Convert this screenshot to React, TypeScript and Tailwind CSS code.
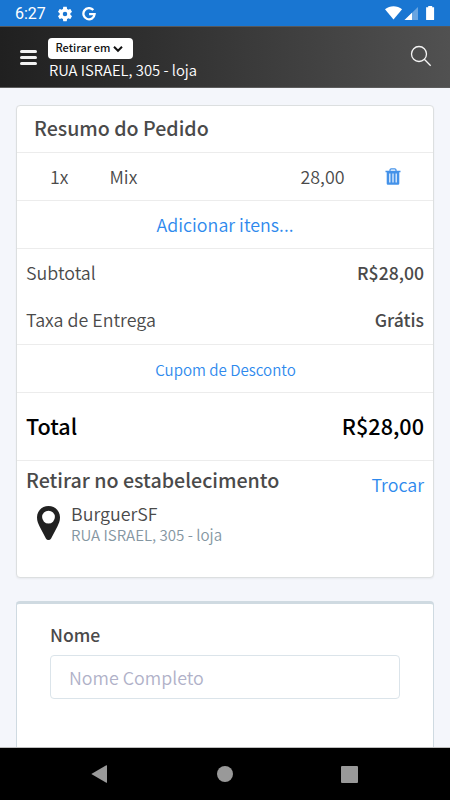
import React from 'react';

function StatusBar() {
  return (
    <div className="flex h-[26px] shrink-0 items-center bg-[#1976d2] pl-[15px] pr-[15px] text-white">
      <span className="w-[31px] whitespace-nowrap font-[Roboto,sans-serif] text-[16px] leading-[26px] mt-[2px]">6:27</span>
      <svg className="ml-[10px] mt-px h-[18px] w-[18px]" viewBox="0 0 24 24" fill="currentColor">
        <path d="M19.14 12.94c.04-.3.06-.61.06-.94 0-.32-.02-.64-.07-.94l2.03-1.58c.18-.14.23-.41.12-.61l-1.92-3.32c-.12-.22-.37-.29-.59-.22l-2.39.96c-.5-.38-1.03-.7-1.62-.94l-.36-2.54c-.04-.24-.24-.41-.48-.41h-3.84c-.24 0-.43.17-.47.41l-.36 2.54c-.59.24-1.13.57-1.62.94l-2.39-.96c-.22-.08-.47 0-.59.22L2.74 8.87c-.12.21-.08.47.12.61l2.03 1.58c-.05.3-.09.63-.09.94s.02.64.07.94l-2.03 1.58c-.18.14-.23.41-.12.61l1.92 3.32c.12.22.37.29.59.22l2.39-.96c.5.38 1.03.7 1.62.94l.36 2.54c.05.24.24.41.48.41h3.84c.24 0 .44-.17.47-.41l.36-2.54c.59-.24 1.13-.56 1.62-.94l2.39.96c.22.08.47 0 .59-.22l1.92-3.32c.12-.22.07-.47-.12-.61zM12 15A3 3 0 1 1 12 9a3 3 0 0 1 0 6z" />
      </svg>
      <svg className="ml-[8px] mt-px h-[14px] w-[14px]" viewBox="0 0 14 14" fill="none" stroke="currentColor" strokeWidth="2.3">
        <path d="M11.300 3.100A5.600 5.600 0 1 0 12.600 7.200H7.100" />
      </svg>
      <div className="grow" />
      <svg className="h-[14px] w-[50px]" viewBox="0 0 50 14">
        <path d="M0 3.300C4.900-.9 12.200-.9 17.100 3.300L8.500 13.500z" fill="#fff" />
        <path d="M33 1v13H19.500z" fill="#fff" fillOpacity=".35" />
        <path d="M27 6.800V14h-7.500z" fill="#fff" />
        <path d="M43.200 0h4v1.300h1.900v12.200a.7.7 0 0 1-.7.700h-6.600a.7.7 0 0 1-.7-.7V1.300h2.100z" fill="#fff" />
      </svg>
    </div>
  );
}

function Header() {
  return (
    <header className="flex h-[62px] shrink-0 items-start border-t border-b border-t-[#55585c] border-b-[#5c5c5c] bg-linear-to-r from-[#202020] to-[#515151] pl-[19.500px] pr-[18px]">
      <div className="mt-[23px] flex w-[17.500px] flex-col gap-[3px]">
        <span className="h-[3px] rounded-sm bg-[#f2f2f2]" />
        <span className="h-[3px] rounded-sm bg-[#f2f2f2]" />
        <span className="h-[3px] rounded-sm bg-[#f2f2f2]" />
      </div>
      <div className="ml-[11px] mt-[11px]">
        <button className="flex h-[21px] w-[85px] items-center rounded bg-white pl-[7.500px] text-[11px] font-medium text-[#111]">
          <span className="-mt-[3px] w-[54.500px] whitespace-nowrap text-left leading-[18px]">Retirar em</span>
          <svg className="ml-[3px] h-2 w-[10px]" viewBox="0 0 10 8" fill="none" stroke="#111" strokeWidth="2">
            <path d="M1 1.800l4 4 4-4" />
          </svg>
        </button>
        <div className="ml-px whitespace-nowrap text-[14.800px] font-[350] leading-[22px] text-white">RUA ISRAEL, 305 - loja</div>
      </div>
      <div className="grow" />
      <svg className="mt-[18px] h-[22px] w-[22px]" viewBox="0 0 22 22" fill="none" stroke="#f5f5f5" strokeWidth="1.300">
        <circle cx="9" cy="9" r="7.500" />
        <path d="M14.300 14.300l6.400 6.400" />
      </svg>
    </header>
  );
}

function TrashIcon() {
  return (
    <svg className="h-[17px] w-[16px]" viewBox="0 0 16 17">
      <path d="M5 3V1.900Q5.100.8 6.200.8h3.600Q10.900.8 11 1.900V3" fill="none" stroke="#4492e9" strokeWidth="1.200" />
      <path d="M.5 2.700h15v1.500h-15zM1.700 4h12.600v11.500a1.200 1.200 0 0 1-1.200 1.200H2.900a1.200 1.200 0 0 1-1.200-1.200z" fill="#4492e9" />
      <path d="M4.800 5.500v9M8 5.500v9M11.200 5.500v9" stroke="#e4f0fd" strokeWidth="1.300" />
    </svg>
  );
}

function OrderSummary() {
  return (
    <section className="h-[473px] shrink-0 rounded border border-[#dcdfe0] bg-white shadow-[0_1px_2px_rgba(0,0,0,0.05)]">
      <h2 className="h-[47px] border-b border-[#ececec] pl-[17px] text-[19.600px] font-medium leading-[44px] text-[#4a4a4a]">Resumo do Pedido</h2>
      <div className="flex h-12 items-center border-b border-[#ececec] pl-[33px] pr-[32px] text-[17.850px] font-[350] leading-[47px] text-[#4a4a4a]">
        <span className="w-[59.500px]">1x</span>
        <span className="grow">Mix</span>
        <span className="mr-[40.500px]">28,00</span>
        <TrashIcon />
      </div>
      <div className="h-12 border-b border-[#ececec] text-center text-[17.850px] font-[350] leading-[47px] text-[#2e89ed]">Adicionar itens...</div>
      <div className="h-24 border-b border-[#ececec] px-[9px] text-[17.850px] font-[350] text-[#4a4a4a]">
        <div className="flex h-[47px] items-center justify-between leading-[47px]">
          <span>Subtotal</span>
          <span className="text-[17.600px] font-medium">R$28,00</span>
        </div>
        <div className="flex h-[47px] items-center justify-between leading-[47px]">
          <span>Taxa de Entrega</span>
          <span className="text-[17.600px] font-medium">Grátis</span>
        </div>
      </div>
      <div className="h-12 border-b border-[#ececec] pl-px text-center text-[15.100px] font-[350] leading-[48px] text-[#2e89ed]">Cupom de Desconto</div>
      <div className="flex h-[68px] items-center justify-between border-b border-[#ececec] px-[9px] text-[21.600px] font-medium text-black">
        <span>Total</span>
        <span>R$28,00</span>
      </div>
      <div className="flex justify-between px-[9px]">
        <div>
          <h3 className="whitespace-nowrap text-[19.650px] font-medium leading-[38px] text-[#4a4a4a]">Retirar no estabelecimento</h3>
          <div className="flex pl-[11px] pt-px">
            <svg className="mt-[6px] h-[34px] w-[23px]" viewBox="0 0 23 34">
              <path fillRule="evenodd" d="M11.500 0C5.100 0 0 4.900 0 11.200c0 3.800 1.200 6.300 2.600 9.300L8.900 32.400q.9 1.600 2.600 1.600t2.600-1.600L20.400 20.500C21.800 17.500 23 15 23 11.200 23 4.900 17.900 0 11.500 0zm0 4.700a6.400 6.400 0 1 1 0 12.800 6.400 6.400 0 0 1 0-12.800z" fill="#212121" />
            </svg>
            <div className="ml-[11px] whitespace-nowrap font-[350]">
              <div className="text-[17.850px] leading-[26px] text-[#4a4a4a]">BurguerSF</div>
              <div className="text-[15.100px] leading-4 text-[#8496a2]">RUA ISRAEL, 305 - loja</div>
            </div>
          </div>
        </div>
        <a className="text-[17.850px] font-[350] leading-[46px] text-[#2e89ed]">Trocar</a>
      </div>
    </section>
  );
}

function CustomerForm() {
  return (
    <section className="mt-[23px] grow rounded-t border border-b-0 border-t-[3px] border-[#cfdae1] bg-white px-[33px] pt-[17px]">
      <label className="block text-[17.600px] font-medium leading-[28px] text-[#4a4a4a]">Nome</label>
      <input
        className="mt-[6px] block h-11 w-[350px] rounded border border-[#dbe4ea] bg-white pl-[18px] text-[17.850px] font-[350] placeholder:text-[#b0b1c8] placeholder:opacity-100"
        placeholder="Nome Completo"
      />
    </section>
  );
}

function NavBar() {
  return (
    <nav className="flex h-[53px] shrink-0 items-center border-t border-[#bdbdbd] bg-black pl-[91px]">
      <svg className="h-[18px] w-4" viewBox="0 0 16 18">
        <path d="M.3 9L15.300.3Q16 0 16 .8v16.400q0 .8-.7.5z" fill="#999" />
      </svg>
      <span className="ml-[110px] h-[16px] w-[16px] rounded-full bg-[#999]" />
      <span className="ml-[108px] h-[17px] w-[17px] rounded-[1px] bg-[#999]" />
    </nav>
  );
}

export default function App() {
  return (
    <div className="flex h-[800px] w-[450px] flex-col overflow-hidden bg-[#f4f6fb] font-['Noto_Sans_CJK_SC','Noto_Sans',sans-serif]">
      <StatusBar />
      <Header />
      <main className="flex grow flex-col px-4 pt-[17px]">
        <OrderSummary />
        <CustomerForm />
      </main>
      <NavBar />
    </div>
  );
}
